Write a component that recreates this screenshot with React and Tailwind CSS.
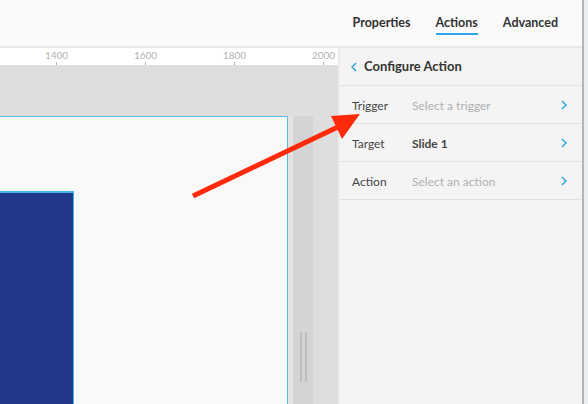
import React from "react";

const Chevron = ({ dir = "right" }) => (
  <svg width="6" height="10" viewBox="0 0 6 10" className="shrink-0">
    {dir === "right" ? (
      <path d="M1 1 L5 5 L1 9" fill="none" stroke="#2a9fdd" strokeWidth="1.4" />
    ) : (
      <path d="M5 1 L1 5 L5 9" fill="none" stroke="#2a9fdd" strokeWidth="1.4" />
    )}
  </svg>
);

function Row({ label, value, placeholder }) {
  return (
    <div className="flex h-[38px] items-center border-b border-[#e2e2e2] pl-[12px] pr-[15px] pt-[3px]">
      <div className="w-[60px] text-[12px] text-[#444]">{label}</div>
      <div
        className={
          placeholder
            ? "flex-1 text-[12px] text-[#b0b0b0]"
            : "flex-1 text-[12px] font-bold text-[#444]"
        }
      >
        {value}
      </div>
      <div className="-mt-[2px]">
        <Chevron />
      </div>
    </div>
  );
}

export default function App() {
  const ticks = ["1400", "1600", "1800", "2000"];
  return (
    <div
      className="relative flex h-[404px] w-[588px] overflow-hidden bg-[#fafafa]"
      style={{ fontFamily: "Lato, 'Open Sans', sans-serif" }}
    >
      <div className="flex w-[582px] flex-col">
        {/* header */}
        <div className="flex h-[48px] shrink-0 items-center justify-end gap-[25px] border-b-2 border-[#e8e8e8] pr-[24px] text-[12.5px] font-bold text-[#333]">
          <div className="pt-[1px]">Properties</div>
          <div className="relative pt-[1px]">
            Actions
            <div className="absolute left-0 right-0 top-[20px] h-[2px] bg-[#2aa7e8]" />
          </div>
          <div className="pt-[1px]">Advanced</div>
        </div>
        {/* body */}
        <div className="flex flex-1">
          {/* left canvas */}
          <div className="flex w-[338px] shrink-0 flex-col overflow-hidden">
            <div className="flex h-[17px] shrink-0 bg-white pl-[12px]">
              {ticks.map((t) => (
                <div key={t} className="flex w-[89px] shrink-0 flex-col items-center">
                  <div className="mt-[1px] text-[10px] leading-[12px] text-[#b3b3b3]">{t}</div>
                  <div className="mt-auto h-[3px] w-px bg-[#b3b3b3]" />
                </div>
              ))}
            </div>
            <div className="flex flex-1 bg-[#dedede] pt-[51px]">
              <div className="flex w-[288px] flex-col border-r border-t border-[#5db6ea] bg-[#f9f9f9] pt-[74px]">
                <div className="flex-1 w-[74px] border-r border-t-2 border-[#3fb3ec] bg-[#22398a]" />
              </div>
              <div className="w-[5px] bg-[#e3e3e3]" />
              <div className="flex w-[20px] items-end justify-center gap-[3px] bg-[#d4d4d4] pb-[22px]">
                <div className="h-[50px] w-[2px] bg-[#bdbdbd]" />
                <div className="h-[50px] w-[2px] bg-[#bdbdbd]" />
              </div>
            </div>
          </div>
          {/* right panel */}
          <div className="flex flex-1 flex-col border-l-2 border-[#ececec] bg-[#f4f4f4]">
            <div className="flex h-[38px] items-center gap-[7px] border-b border-[#e2e2e2] pl-[11px] pt-[1px] text-[13px] font-bold text-[#333]">
              <Chevron dir="left" />
              <span>Configure Action</span>
            </div>
            <Row label="Trigger" value="Select a trigger" placeholder />
            <Row label="Target" value="Slide 1" />
            <Row label="Action" value="Select an action" placeholder />
          </div>
        </div>
      </div>
      <div className="w-[2px] bg-[#b4b4b4]" />
      <div className="w-[4px] bg-[#e9eef2]" />

      {/* annotation arrow */}
      <svg className="pointer-events-none absolute left-0 top-0" width="588" height="404">
        <line x1="193" y1="196" x2="340" y2="126" stroke="#ff2a0a" strokeWidth="5" />
        <polygon points="331,116 360,114 342,139" fill="#ff2a0a" />
      </svg>
    </div>
  );
}
